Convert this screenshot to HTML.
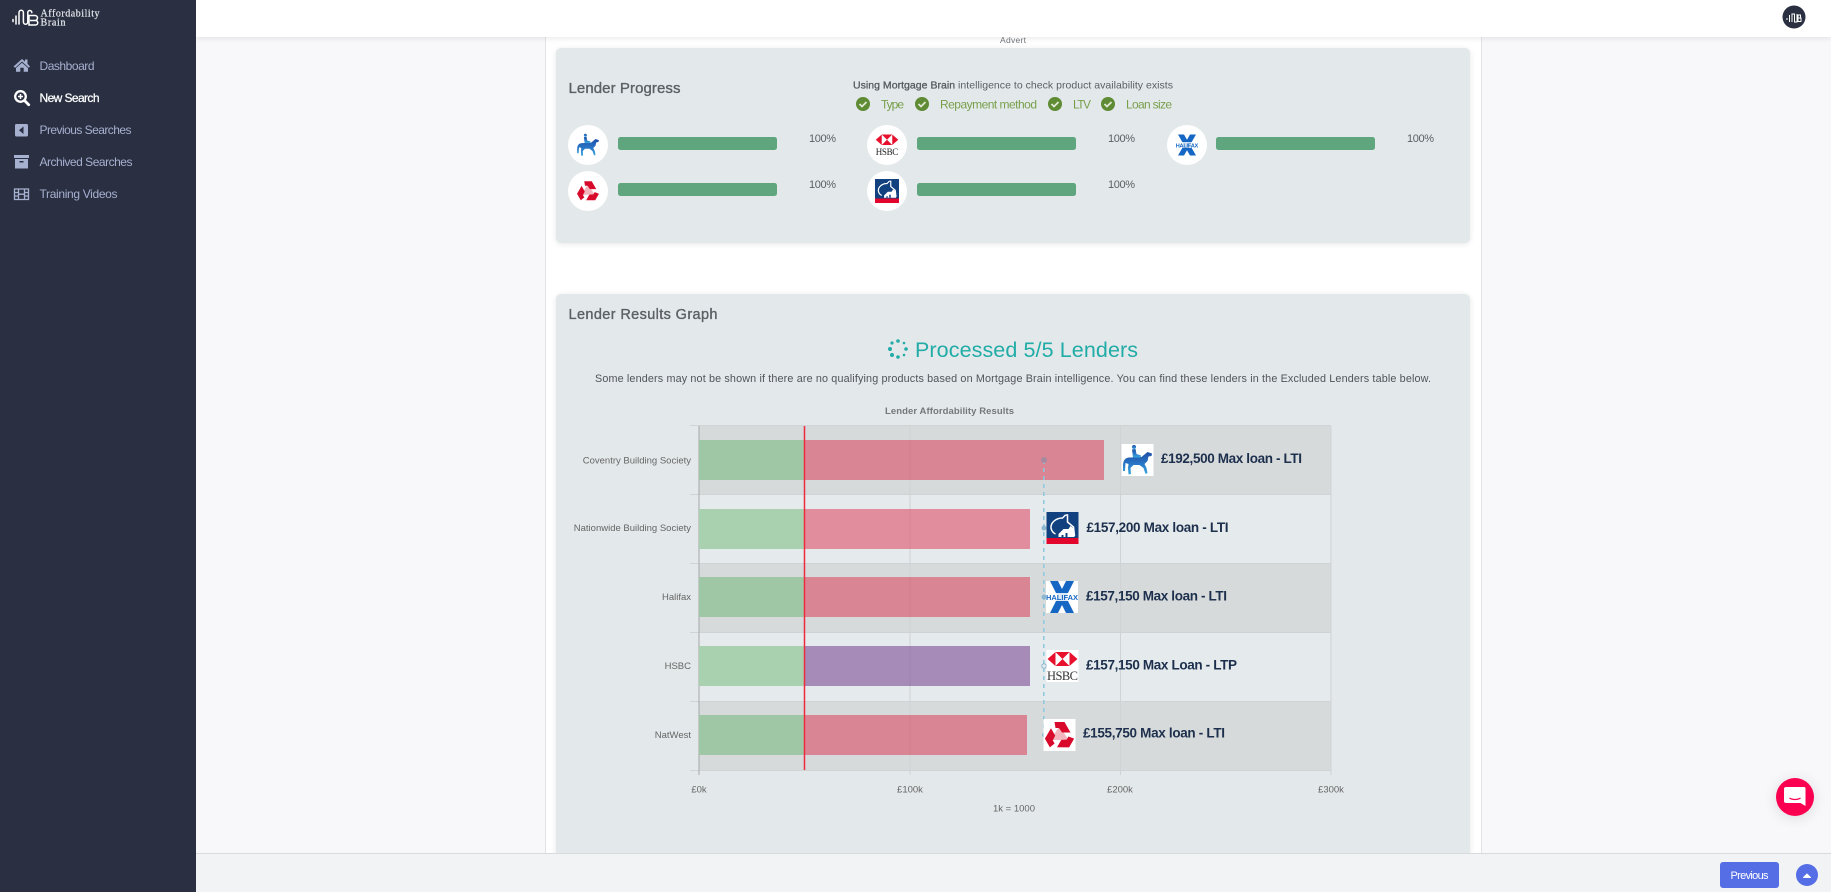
<!DOCTYPE html>
<html lang="en"><head><meta charset="utf-8"><title>Lender Results</title>
<style>
html,body{margin:0;padding:0;width:1831px;height:892px;overflow:hidden;background:#f8f8fb;font-family:"Liberation Sans",sans-serif}
.a{position:absolute}
svg{position:absolute;left:0;top:0;overflow:visible}
text{font-family:"Liberation Sans",sans-serif}
</style></head><body>
<div class="a" style="left:545px;top:0;width:935px;height:892px;background:#fff;border-left:1px solid #e2e3e6;border-right:1px solid #e2e3e6"></div>
<div class="a" style="left:556px;top:48px;width:914px;height:195px;background:#e3e8ea;border-radius:5px;box-shadow:0 1px 6px rgba(0,0,0,.1)"></div>
<div class="a" style="left:556px;top:294px;width:914px;height:570px;background:#e3e8ea;border-radius:5px;box-shadow:0 1px 6px rgba(0,0,0,.1)"></div>
<div class="a" style="left:196px;top:0;width:1635px;height:37px;background:#fff;box-shadow:0 2px 5px rgba(0,0,0,.08)"></div>
<div class="a" style="left:196px;top:853px;width:1635px;height:39px;background:#f1f3f5;border-top:1px solid #d8dadc;box-sizing:border-box"></div>
<div class="a" style="left:0;top:0;width:196px;height:892px;background:#2a3042"></div>
<div class="a" style="left:1720px;top:862px;width:59px;height:26px;background:#556ee6;border-radius:3px"></div>
<div class="a" style="left:1776px;top:778px;width:38px;height:38px;background:#fb0051;border-radius:50%;box-shadow:0 2px 14px rgba(0,0,0,.12)"></div>

<svg width="1831" height="892" viewBox="0 0 1831 892">
<!-- brand -->
<path d="M13 19.500v2M16 16v8M19 24V12.500a2.200 2.200 0 0 1 4.400 0V22a2.200 2.200 0 0 0 4.400 0V12.500a2 2 0 0 1 4 0" fill="none" stroke="#fff" stroke-width="1.500" stroke-linecap="round"/>
<path d="M29 16h6a2.500 2.500 0 0 1 0 5h-5h5.500a2 2 0 0 1 0 4.500H29z" fill="none" stroke="#fff" stroke-width="1.500" transform="translate(0 -.5)"/>
<text x="40.500" y="16.500" font-size="10" fill="#e8eaee" stroke="#e8eaee" stroke-width=".2" textLength="59" style="font-family:'Liberation Serif',serif">Affordability</text>
<text x="40.500" y="25.500" font-size="10" fill="#e8eaee" stroke="#e8eaee" stroke-width=".2" textLength="25" style="font-family:'Liberation Serif',serif">Brain</text>
<!-- side icons -->
<path d="M13.500 66.500L22 59l3 2.600V59.500h2.500v4.300l2.500 2.700-1.200 1.200L22 61.500l-6.800 6.200zM16 68l6-5.300 6 5.300v3.700h-4.300v-4h-3.400v4H16z" fill="#a6b0cf"/>
<circle cx="20.500" cy="96.500" r="5.300" fill="none" stroke="#fff" stroke-width="2.300"/><path d="M24.500 100.500l4.200 4.200" stroke="#fff" stroke-width="2.800" stroke-linecap="round"/><path d="M18 96.500h5M20.500 94v5" stroke="#fff" stroke-width="1.500"/>
<rect x="15" y="124" width="13" height="12.500" rx="1.500" fill="#a6b0cf"/><path d="M23.500 126.500v7.500l-4.500-3.700z" fill="#2a3042"/>
<rect x="14" y="155" width="15" height="3" fill="#a6b0cf"/><path d="M15 159h13v9.500H15z" fill="#a6b0cf"/><rect x="19.500" y="161" width="4" height="1.500" fill="#2a3042"/>
<path d="M14.500 189h14v10.500h-14z" fill="none" stroke="#a6b0cf" stroke-width="1.300"/><path d="M18.500 189v10.500M24.500 189v10.500M14.500 192.500h4M14.500 196h4M24.500 192.500h4M24.500 196h4M18.500 194.200h6" stroke="#a6b0cf" stroke-width="1.300"/>
<!-- side labels -->
<g font-size="12" fill="#a6b0cf">
<text x="39.500" y="70" textLength="55">Dashboard</text>
<text x="39.500" y="102" textLength="60" fill="#fff" stroke="#fff" stroke-width=".25">New Search</text>
<text x="39.500" y="134" textLength="92">Previous Searches</text>
<text x="39.500" y="166" textLength="93">Archived Searches</text>
<text x="39.500" y="198" textLength="78">Training Videos</text>
</g>
<!-- top -->
<circle cx="1794" cy="17" r="11.500" fill="#2a3042"/>
<path d="M1787 18v2M1789.500 15v7M1792 22v-8h2.500v8h2.500v-8M1798 15h2.500v3h-2.500zM1798 18h3v3.500h-3z" fill="none" stroke="#fff" stroke-width="1"/>
<text x="1000" y="43" font-size="8.500" fill="#6f7478" textLength="26">Advert</text>

<!-- progress card text -->
<text x="568.500" y="93" font-size="15" fill="#5b6065" stroke="#5b6065" stroke-width=".35" textLength="112">Lender Progress</text>
<text x="853" y="88.500" font-size="10.500" fill="#5b6065" textLength="320"><tspan stroke="#555a60" stroke-width=".3" fill="#555a60">Using Mortgage Brain</tspan> intelligence to check product availability exists</text>
<g fill="#78a04c"><text x="881" y="108.500" font-size="12" textLength="23">Type</text><text x="940" y="108.500" font-size="12" textLength="97">Repayment method</text><text x="1073" y="108.500" font-size="12" textLength="18">LTV</text><text x="1126" y="108.500" font-size="12" textLength="46">Loan size</text></g>
<g fill="#5e8b33"><circle cx="863" cy="104" r="7"/><circle cx="922" cy="104" r="7"/><circle cx="1055" cy="104" r="7"/><circle cx="1108" cy="104" r="7"/></g>
<g fill="none" stroke="#dfe8d4" stroke-width="1.800"><path d="M859.500 104l2.500 2.500 4.500-4.500"/><path d="M918.500 104l2.500 2.500 4.500-4.500"/><path d="M1051.500 104l2.500 2.500 4.500-4.500"/><path d="M1104.500 104l2.500 2.500 4.500-4.500"/></g>
<g fill="#fff"><circle cx="588" cy="145" r="20"/><circle cx="588" cy="191" r="20"/><circle cx="887" cy="145" r="20"/><circle cx="887" cy="191" r="20"/><circle cx="1187" cy="145" r="20"/></g>
<g fill="#5fa67f"><rect x="618" y="137" width="159" height="13" rx="2.500"/><rect x="618" y="183" width="159" height="13" rx="2.500"/><rect x="917" y="137" width="159" height="13" rx="2.500"/><rect x="917" y="183" width="159" height="13" rx="2.500"/><rect x="1216" y="137" width="159" height="13" rx="2.500"/></g>
<g font-size="11" fill="#5b6065"><text x="809" y="142" textLength="27">100%</text><text x="809" y="188" textLength="27">100%</text><text x="1108" y="142" textLength="27">100%</text><text x="1108" y="188" textLength="27">100%</text><text x="1407" y="142" textLength="27">100%</text></g>

<defs><linearGradient id="h" x1="0" y1="0" x2="0" y2="1"><stop offset="0" stop-color="#1d4fa6"/><stop offset=".55" stop-color="#2a78c8"/><stop offset="1" stop-color="#3aa8de"/></linearGradient></defs>

<!-- card logos -->
<svg x="576" y="133" width="24" height="24" viewBox="0 0 32 32"><g fill="url(#h)"><path d="M1.500 22C1.500 16 4 13.500 8 13.500L20 13L26 8L30.500 9.500L30 12L27 12.500L26 17L23 20L25 24L26 29L24 30L22 24L18 21L12 21L9 24L9.500 30L7 30.500L6.500 24L7 20L4 19L3.500 27L1.500 27Z"/><circle cx="12.500" cy="3" r="2"/><path d="M10.500 5.500L14 5L15 10L19.500 11.500L19 13.500H11.500Z"/></g></svg>
<svg x="875" y="133" width="24" height="24" viewBox="0 0 32 32"><path d="M1 9L9 2H23L31 9L23 16H9Z" fill="#e8112d"/><path d="M9 2L16 9L9 16ZM23 2L16 9L23 16Z" fill="#fff"/><text x="1" y="29" font-size="12" textLength="30" fill="#222" style="font-family:'Liberation Serif',serif">HSBC</text></svg>
<svg x="576" y="179" width="24" height="24" viewBox="0 0 32 32"><path d="M16 7L25 21H7Z" fill="#f3b6be"/><g fill="#d9092b"><path d="M11 3H21L27 13.500H18.500L15.500 9H12Z"/><path d="M11 3H21L27 13.500H18.500L15.500 9H12Z" transform="rotate(120 16 17)"/><path d="M11 3H21L27 13.500H18.500L15.500 9H12Z" transform="rotate(240 16 17)"/></g></svg>
<svg x="875" y="179" width="24" height="24" viewBox="0 0 32 32"><rect width="32" height="26" fill="#12417f"/><rect y="26" width="32" height="6" fill="#e2062c"/><g fill="none" stroke="#fff" stroke-width="1.600"><path d="M19 3L16 6C9 6 4 11 4.500 16C5 19 7 21 9 22"/><path d="M19 3H21V10L27 15L28 24"/></g><path d="M12 22L17 17H22L24 14L28 17V25H12Z" fill="#fff"/><path d="M19 21h2v4h-2zM15 23h2v2h-2z" fill="#12417f"/></svg>
<svg x="1175" y="133" width="24" height="24" viewBox="0 0 32 32"><path d="M4 2H12L16 9L20 2H28L20 16L28 30H20L16 23L12 30H4L12 16Z" fill="#1667c4"/><rect x="0" y="12" width="32" height="8" fill="#fff" fill-opacity=".8"/><text x="1" y="19" font-size="7.500" font-weight="bold" fill="#1667c4" textLength="30">HALIFAX</text></svg>

<!-- results header -->
<text x="568.500" y="319" font-size="14.500" fill="#5b6065" stroke="#5b6065" stroke-width=".35" textLength="149">Lender Results Graph</text>
<g fill="#21aca7"><circle cx="898" cy="341" r="1.800"/><circle cx="904" cy="343" r="1.300"/><circle cx="906" cy="349" r="1.800"/><circle cx="904" cy="355" r="1.300"/><circle cx="898" cy="357" r="1.800"/><circle cx="892" cy="355" r="2"/><circle cx="890" cy="349" r="2"/><circle cx="892" cy="343" r="1.600"/></g>
<text x="915" y="357" font-size="21.500" fill="#21aca7" textLength="223">Processed 5/5 Lenders</text>
<text x="595" y="382" font-size="10.800" fill="#50555a" textLength="836">Some lenders may not be shown if there are no qualifying products based on Mortgage Brain intelligence. You can find these lenders in the Excluded Lenders table below.</text>
<text x="885" y="414" font-size="9.500" font-weight="bold" fill="#74787b" textLength="129">Lender Affordability Results</text>

<!-- chart -->
<g fill="#d7dadb"><rect x="699" y="426" width="632" height="68.500"/><rect x="699" y="563" width="632" height="69"/><rect x="699" y="701" width="632" height="69"/></g>
<g fill="#e5eaec"><rect x="699" y="494.500" width="632" height="68.500"/><rect x="699" y="632" width="632" height="69"/></g>
<path d="M690 425.500H1331M690 494.500H1331M690 563.500H1331M690 632.500H1331M690 701.500H1331M690 770.500H1331" stroke="#cfd3d5" stroke-width="1"/>
<path d="M910 426V775M1120.500 426V775M1331 426V775" stroke="#cfd3d5" stroke-width="1"/>
<path d="M699 426V775" stroke="#a5a8aa" stroke-width="1"/>
<g fill="#a0c7a5"><rect x="699" y="440" width="105" height="40"/><rect x="699" y="577" width="105" height="40"/><rect x="699" y="715" width="105" height="40"/></g>
<g fill="#aad1af"><rect x="699" y="509" width="105" height="40"/><rect x="699" y="646" width="105" height="40"/></g>
<rect x="804" y="440" width="300" height="40" fill="#da8594"/>
<rect x="804" y="509" width="226" height="40" fill="#e28d9e"/>
<rect x="804" y="577" width="226" height="40" fill="#da8594"/>
<rect x="804" y="646" width="226" height="40" fill="#a68ab8"/>
<rect x="804" y="715" width="223" height="40" fill="#da8594"/>
<path d="M910 440V480M910 509V549M910 577V617M910 646V686M910 715V755" stroke="#000" stroke-opacity=".05"/>
<path d="M804.500 426V770" stroke="#ee2a3e" stroke-width="1.500"/>
<path d="M1043.800 460V735" stroke="#8cc9df" stroke-width="1.500" stroke-dasharray="4 4"/>
<circle cx="1044" cy="460" r="3" fill="#a58aa0"/><circle cx="1044" cy="528" r="2.500" fill="#8db7cf"/><circle cx="1044" cy="597" r="2.500" fill="#8db7cf"/><circle cx="1044" cy="666" r="2.300" fill="none" stroke="#8db7cf"/><circle cx="1044" cy="735" r="2" fill="#8db7cf"/>
<g font-size="9.500" fill="#666" text-anchor="end"><text x="691" y="463.500">Coventry Building Society</text><text x="691" y="531">Nationwide Building Society</text><text x="691" y="600">Halifax</text><text x="691" y="669">HSBC</text><text x="691" y="738">NatWest</text></g>
<g font-size="9.500" fill="#666" text-anchor="middle"><text x="699" y="792.500">£0k</text><text x="910" y="792.500">£100k</text><text x="1120" y="792.500">£200k</text><text x="1331" y="792.500">£300k</text><text x="1014" y="811.500">1k = 1000</text></g>
<g font-size="13.500" font-weight="bold" fill="#1c2f4c"><text x="1161" y="463" textLength="141">£192,500 Max loan - LTI</text><text x="1086.500" y="532" textLength="142">£157,200 Max loan - LTI</text><text x="1086" y="600.500" textLength="141">£157,150 Max loan - LTI</text><text x="1086" y="669.500" textLength="151">£157,150 Max Loan - LTP</text><text x="1083" y="737.500" textLength="142">£155,750 Max loan - LTI</text></g>

<!-- chart logos -->
<svg x="1121.500" y="444" width="32" height="32" viewBox="0 0 32 32"><rect width="32" height="32" fill="#fff"/><g fill="url(#h)"><path d="M1.500 22C1.500 16 4 13.500 8 13.500L20 13L26 8L30.500 9.500L30 12L27 12.500L26 17L23 20L25 24L26 29L24 30L22 24L18 21L12 21L9 24L9.500 30L7 30.500L6.500 24L7 20L4 19L3.500 27L1.500 27Z"/><circle cx="12.500" cy="3" r="2"/><path d="M10.500 5.500L14 5L15 10L19.500 11.500L19 13.500H11.500Z"/></g></svg>
<svg x="1046.500" y="512" width="32" height="32" viewBox="0 0 32 32"><rect width="32" height="26" fill="#12417f"/><rect y="26" width="32" height="6" fill="#e2062c"/><g fill="none" stroke="#fff" stroke-width="1.500"><path d="M19 3L16 6C9 6 4 11 4.500 16C5 19 7 21 9 22"/><path d="M19 3H21V10L27 15L28 24"/></g><path d="M12 22L17 17H22L24 14L28 17V25H12Z" fill="#fff"/><path d="M19 21h2v4h-2zM15 23h2v2h-2z" fill="#12417f"/></svg>
<svg x="1046" y="581" width="32" height="32" viewBox="0 0 32 32"><rect width="32" height="32" fill="#fff"/><path d="M4 0H12L16 8L20 0H28L20 16L28 32H20L16 24L12 32H4L12 16Z" fill="#1667c4"/><rect x="0" y="12" width="32" height="8" fill="#fff" fill-opacity=".85"/><text x="0" y="19" font-size="7.500" font-weight="bold" fill="#1667c4" textLength="32">HALIFAX</text></svg>
<svg x="1046.500" y="650" width="32" height="32" viewBox="0 0 32 32"><rect width="32" height="32" fill="#fff"/><path d="M1 9L9 2H23L31 9L23 16H9Z" fill="#e8112d"/><path d="M9 2L16 9L9 16ZM23 2L16 9L23 16Z" fill="#fff"/><text x="0.500" y="30" font-size="12.500" textLength="31" fill="#333" style="font-family:'Liberation Serif',serif">HSBC</text></svg>
<svg x="1043.500" y="719" width="32" height="32" viewBox="0 0 32 32"><rect width="32" height="32" fill="#fff"/><path d="M16 7L25 21H7Z" fill="#f3b6be"/><g fill="#d9092b"><path d="M11 3H21L27 13.500H18.500L15.500 9H12Z"/><path d="M11 3H21L27 13.500H18.500L15.500 9H12Z" transform="rotate(120 16 17)"/><path d="M11 3H21L27 13.500H18.500L15.500 9H12Z" transform="rotate(240 16 17)"/></g></svg>

<!-- footer / chat -->
<path d="M1786 787h18a1.500 1.500 0 0 1 1.500 1.500V806l-5-3h-14.500a2 2 0 0 1-2-2v-12a2 2 0 0 1 2-2z" fill="#fff"/>
<path d="M1789.500 798c3 2 8 2 11 0" fill="none" stroke="#fb0051" stroke-width="1.200"/>
<text x="1730.500" y="879" font-size="11" fill="#fff" textLength="38">Previous</text>
<circle cx="1807" cy="875" r="11" fill="#556ee6"/><path d="M1803.500 877.500l3.500-3.500 3.500 3.500z" fill="#fff" stroke="#fff" stroke-linejoin="round"/>
</svg>
</body></html>
